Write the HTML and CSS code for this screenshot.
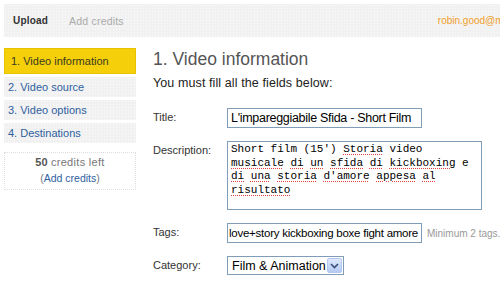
FILE: index.html
```html
<!DOCTYPE html>
<html lang="en">
<head>
  <meta charset="UTF-8" />
  <title>Upload video</title>
  <link rel="stylesheet" href="styles.css">
</head>
<body>
  <div class="topbar">
    <a class="tab active">Upload</a>
    <a class="tab">Add credits</a>
    <span class="user">robin.good@m</span>
  </div>

  <div class="layout">
    <div class="sidebar">
      <a class="step current">1. Video information</a>
      <a class="step">2. Video source</a>
      <a class="step">3. Video options</a>
      <a class="step">4. Destinations</a>

      <div class="credits">
        <div class="credits-count"><b>50</b> credits left</div>
        <div class="credits-link">(<a>Add credits</a>)</div>
      </div>
    </div>

    <div class="main">
      <h2>1. Video information</h2>
      <p class="intro">You must fill all the fields below:</p>

      <div class="field first">
        <label>Title:</label>
        <input class="text title-input" type="text" value="L'impareggiabile Sfida - Short Film" />
      </div>
      <div class="field">
        <label>Description:</label>
        <div class="desc">Short film (15') <u>Storia</u> video
<u>musicale</u> <u>di</u> <u>un</u> <u>sfida</u> <u>di</u> <u>kickboxing</u> e
<u>di</u> <u>una</u> <u>storia</u> <u>d'amore</u> <u>appesa</u> <u>al</u>
<u>risultato</u></div>
      </div>
      <div class="field">
        <label>Tags:</label>
        <input class="text tags-input" type="text" value="love+story kickboxing boxe fight amore" />
        <span class="hint">Minimum 2 tags.</span>
      </div>
      <div class="field">
        <label>Category:</label>
        <div class="select">
          <span>Film &amp; Animation</span>
          <span class="arrow">
            <svg width="9" height="6" viewBox="0 0 9 6"><path d="M1 1 L4.5 4.5 L8 1" fill="none" stroke="#3a4e7a" stroke-width="1.6"/></svg>
          </span>
        </div>
      </div>
    </div>
  </div>
</body>
</html>
```

FILE: styles.css
```css
body {
  margin: 0;
  padding: 4px 0 0 4px;
  background: #fff;
  font-family: 'Liberation Sans', Arial, sans-serif;
  font-size: 11px;
  color: #333;
  overflow: hidden;
}
a {
  cursor: pointer;
}
.topbar {
  height: 33px;
  display: flex;
  align-items: center;
  padding-left: 9px;
  background-color: #f1f1f1;
  background-image: radial-gradient(#fbfbfb 0.6px, transparent 0.7px);
  background-size: 3px 3px;
  white-space: nowrap;
}
.tab {
  margin-right: 21px;
  color: #aaa;
  font-size: 10.5px;
  letter-spacing: 0.2px;
}
.tab.active {
  color: #333;
  font-size: 10px;
  font-weight: bold;
}
.user {
  margin-left: 293px;
  color: #f0a028;
  font-size: 10px;
}
.layout {
  display: flex;
  margin-top: 11px;
}
.sidebar {
  width: 132px;
  flex-shrink: 0;
}
.step {
  display: block;
  height: 20px;
  line-height: 20px;
  padding-left: 4px;
  margin-bottom: 3px;
  color: #2f5f9f;
  background-color: #f1f1f1;
  background-image: radial-gradient(#fbfbfb 0.6px, transparent 0.7px);
  background-size: 3px 3px;
}
.step.current {
  height: 24px;
  line-height: 24px;
  padding-left: 6px;
  color: #3a3a20;
  background: #f4cf0a;
  border: 1px solid #e6c200;
}
.credits {
  margin-top: 9px;
  padding: 1px 0 2px;
  border: 1px dotted #ddd;
  text-align: center;
  color: #777;
  font-size: 11px;
}
.credits-count {
  line-height: 16px;
  letter-spacing: 0.3px;
}
.credits b {
  color: #555;
  letter-spacing: 0;
}
.credits-link {
  line-height: 17px;
  font-size: 10.5px;
}
.credits-link a {
  color: #2f5f9f;
}
.main {
  margin-left: 17px;
  flex: 1;
}
h2 {
  margin: 0;
  font-size: 17.5px;
  font-weight: normal;
  color: #555;
  line-height: 22px;
}
.intro {
  margin: 6px 0 0;
  font-size: 12.5px;
  letter-spacing: 0.1px;
  color: #222;
}
.field {
  display: flex;
  align-items: flex-start;
  margin-top: 13px;
  white-space: nowrap;
}
.field.first {
  margin-top: 18px;
}
label {
  width: 74px;
  flex-shrink: 0;
  font-size: 11px;
  color: #333;
  padding-top: 3px;
}
.text {
  box-sizing: border-box;
  height: 20px;
  border: 1px solid #7f9db9;
  padding: 0 3px;
  font-family: 'Liberation Sans', Arial, sans-serif;
  font-size: 12px;
  color: #000;
  outline: none;
}
.title-input {
  width: 195px;
  font-size: 12.5px;
  letter-spacing: -0.3px;
}
.tags-input {
  width: 195px;
  font-size: 11.5px;
  letter-spacing: -0.25px;
  padding: 0 1px;
}
.desc {
  box-sizing: border-box;
  width: 255px;
  height: 69px;
  border: 1px solid #7f9db9;
  padding: 1px 3px;
  font-family: 'Liberation Mono', 'Courier New', monospace;
  font-size: 11px;
  line-height: 13.5px;
  color: #000;
  white-space: pre;
  overflow: hidden;
}
.desc u {
  text-decoration: underline dotted #e84040;
  text-decoration-thickness: 1px;
  text-underline-offset: 2px;
}
.hint {
  margin-left: 5px;
  padding-top: 5px;
  font-size: 10px;
  color: #999;
}
.select {
  box-sizing: border-box;
  width: 117px;
  height: 19px;
  border: 1px solid #7f9db9;
  display: flex;
  align-items: center;
  justify-content: space-between;
  padding: 0 1px 0 4px;
  font-family: 'Liberation Sans', Arial, sans-serif;
  font-size: 12.5px;
  color: #000;
}
.arrow {
  width: 15px;
  height: 15px;
  display: flex;
  align-items: center;
  justify-content: center;
  background: linear-gradient(#dde8fb, #b6cbf3);
  border: 1px solid #b4c8ee;
  border-radius: 2px;
  box-sizing: border-box;
}
```
